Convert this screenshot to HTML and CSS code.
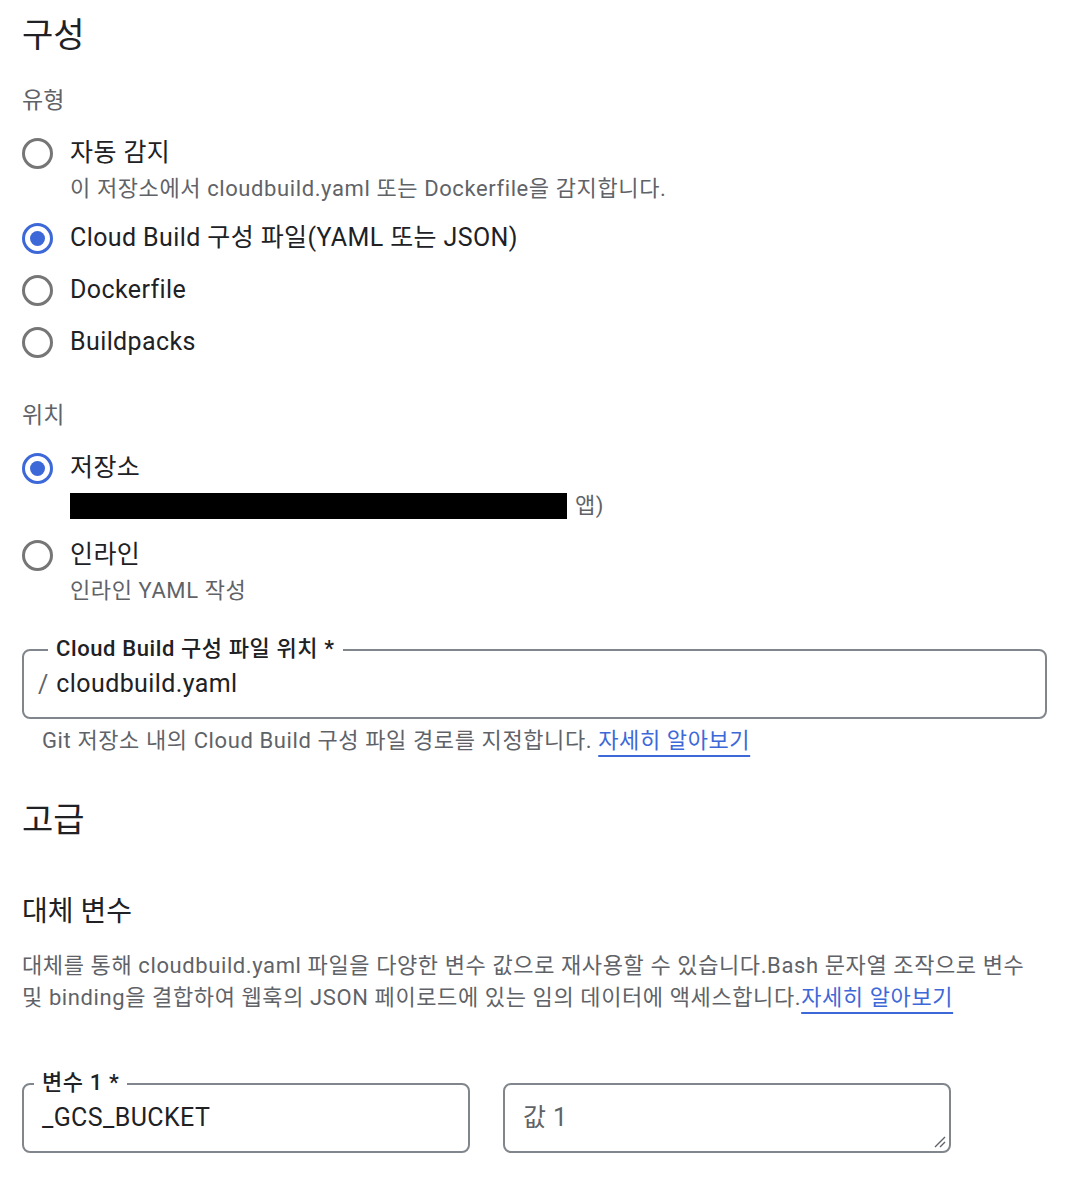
FILE: index.html
```html
<!DOCTYPE html>
<html lang="ko">
<head>
<meta charset="utf-8">
<title>구성</title>
<link rel="stylesheet" href="styles.css">
</head>
<body>
<main class="page">
  <h1 class="h1">구성</h1>

  <div class="group-label first">유형</div>
  <div class="radio-list">
    <div class="radio-item">
      <div class="radio-row"><span class="radio"></span><span class="radio-label">자동 감지</span></div>
      <div class="radio-desc">이 저장소에서 cloudbuild.yaml 또는 Dockerfile을 감지합니다.</div>
    </div>
    <div class="radio-item">
      <div class="radio-row"><span class="radio checked"></span><span class="radio-label">Cloud Build 구성 파일(YAML 또는 JSON)</span></div>
    </div>
    <div class="radio-item">
      <div class="radio-row"><span class="radio"></span><span class="radio-label">Dockerfile</span></div>
    </div>
    <div class="radio-item">
      <div class="radio-row"><span class="radio"></span><span class="radio-label">Buildpacks</span></div>
    </div>
  </div>

  <div class="group-label second">위치</div>
  <div class="radio-list">
    <div class="radio-item">
      <div class="radio-row"><span class="radio checked"></span><span class="radio-label">저장소</span></div>
      <div class="radio-desc repo"><span class="redact"></span><span>앱)</span></div>
    </div>
    <div class="radio-item">
      <div class="radio-row"><span class="radio"></span><span class="radio-label">인라인</span></div>
      <div class="radio-desc">인라인 YAML 작성</div>
    </div>
  </div>

  <div class="field wide">
    <span class="field-label">Cloud Build 구성 파일 위치 *</span>
    <span class="prefix">/</span><span class="field-value">cloudbuild.yaml</span>
  </div>
  <div class="helper">Git 저장소 내의 Cloud Build 구성 파일 경로를 지정합니다. <a class="link" href="#">자세히 알아보기</a></div>

  <h1 class="h1 adv">고급</h1>

  <h2 class="h2">대체 변수</h2>
  <p class="para">대체를 통해 cloudbuild.yaml 파일을 다양한 변수 값으로 재사용할 수 있습니다.Bash 문자열 조작으로 변수 및 binding을 결합하여 웹훅의 JSON 페이로드에 있는 임의 데이터에 액세스합니다.<a class="link" href="#">자세히 알아보기</a></p>

  <div class="var-row">
    <div class="field half">
      <span class="field-label small">변수 1 *</span>
      <span class="field-value">_GCS_BUCKET</span>
    </div>
    <div class="field half">
      <span class="field-value placeholder">값 1</span>
      <svg class="grip" width="14" height="14" viewBox="0 0 14 14"><path d="M13 3 L3 13 M13 8 L8 13" stroke="#5f6368" stroke-width="1.4" fill="none"/></svg>
    </div>
  </div>
</main>
</body>
</html>
```
FILE: styles.css
```css
* { box-sizing: border-box; }
html, body { margin: 0; background: #fff; }
body {
  font-family: Roboto, "Noto Sans CJK KR", sans-serif;
  color: #202124;
}
.page {
  padding: 15px 0 0 22px;
  width: 1048px;
}
.h1 {
  font-size: 34px;
  line-height: 40px;
  font-weight: 400;
  margin: 0;
}
.group-label {
  font-size: 23px;
  line-height: 28px;
  color: #5f6368;
}
.group-label.first { margin-top: 32px; }
.group-label.second { margin-top: 43px; }
.radio-list {
  display: flex;
  flex-direction: column;
  gap: 18px;
  margin-top: 21px;
}
.radio-row {
  display: flex;
  align-items: center;
  gap: 17px;
  height: 34px;
}
.radio {
  width: 31px;
  height: 31px;
  border: 3px solid #767676;
  border-radius: 50%;
  flex: none;
  position: relative;
}
.radio.checked { border-color: #3d68d8; }
.radio.checked::after {
  content: "";
  position: absolute;
  left: 5px; top: 5px;
  width: 15px; height: 15px;
  border-radius: 50%;
  background: #3d68d8;
}
.radio-label {
  font-size: 25px;
  line-height: 34px;
  letter-spacing: 0.4px;
}
.radio-desc {
  margin: 5px 0 0 48px;
  font-size: 22px;
  line-height: 28px;
  letter-spacing: 0.6px;
  color: #5f6368;
}
.radio-desc.repo {
  display: flex;
  align-items: center;
  gap: 8px;
  margin-top: 7px;
}
.redact {
  display: inline-block;
  width: 497px;
  height: 26px;
  background: #000;
}
.field {
  position: relative;
  border: 2px solid #80868b;
  border-radius: 8px;
  height: 70px;
  display: flex;
  align-items: center;
  padding: 0 18px;
}
.field.wide {
  margin-top: 44px;
  width: 1025px;
  padding-left: 14px;
}
.field-label {
  position: absolute;
  top: -17px;
  left: 24px;
  padding: 0 8px;
  background: #fff;
  font-size: 22px;
  line-height: 30px;
  font-weight: 500;
  letter-spacing: 0.6px;
  color: #202124;
}
.field-label.small { left: 10px; }
.prefix {
  font-size: 25px;
  color: #5f6368;
  margin-right: 8px;
}
.field-value {
  font-size: 25px;
  line-height: 32px;
  letter-spacing: 0.4px;
}
.placeholder { color: #5f6368; }
.helper {
  margin: 8px 0 0 20px;
  font-size: 22px;
  line-height: 28px;
  letter-spacing: 0.6px;
  color: #5f6368;
}
.link {
  color: #3d68d8;
  text-decoration: underline;
  text-decoration-thickness: 2px;
  text-underline-offset: 7px;
}
.h1.adv { margin-top: 45px; }
.h2 {
  margin: 55px 0 0;
  font-size: 28px;
  line-height: 34px;
  font-weight: 400;
}
.para {
  margin: 21px 0 0;
  font-size: 22px;
  line-height: 32px;
  letter-spacing: 0.6px;
  color: #5f6368;
  width: 1024px;
}
.var-row {
  display: flex;
  gap: 33px;
  margin-top: 69px;
}
.field.half { width: 448px; }
.grip {
  position: absolute;
  right: 3px;
  bottom: 3px;
}
```
